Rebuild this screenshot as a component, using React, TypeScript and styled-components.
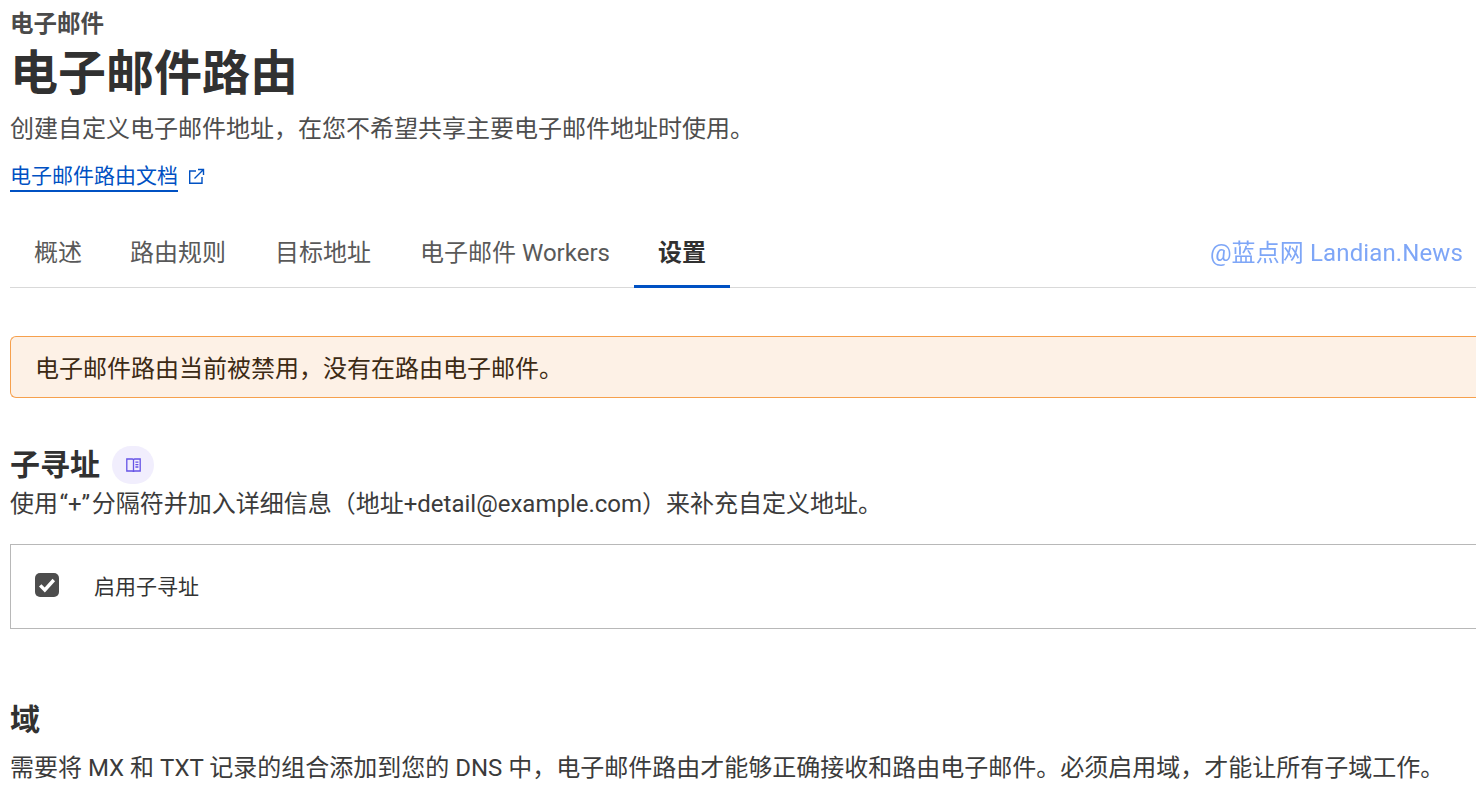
import React from 'react';
import styled, { createGlobalStyle } from 'styled-components';

const GlobalStyle = createGlobalStyle`
  html, body {
    margin: 0;
    padding: 0;
    background: #fff;
    overflow: hidden;
  }
  body {
    font-family: Roboto, "Noto Sans CJK SC", sans-serif;
    color: #36393a;
  }
`;

const Page = styled.div`
  position: relative;
  width: 1476px;
  height: 793px;
  padding-left: 10px;
  box-sizing: border-box;
  overflow: hidden;
`;

const Crumb = styled.div`
  font-size: 23.5px;
  line-height: 30px;
  font-weight: 700;
  color: #4a4a4a;
  padding-top: 9px;
`;

const Title = styled.h1`
  margin: 1px 0 0;
  font-size: 48px;
  line-height: 68px;
  font-weight: 700;
  color: #313131;
`;

const Lead = styled.p`
  margin: 4px 0 0;
  font-size: 24px;
  line-height: 34px;
  color: #4e4e4e;
`;

const DocRow = styled.div`
  display: flex;
  align-items: center;
  gap: 10px;
  margin-top: 13px;
  height: 34px;
`;

const DocLink = styled.a`
  font-size: 21px;
  line-height: 27px;
  padding-top: 2px;
  color: #0051c3;
  border-bottom: 2px solid #0051c3;
`;

const Tabs = styled.div`
  display: flex;
  height: 71px;
  margin-top: 23px;
  border-bottom: 1px solid #d9d9d9;
  box-sizing: content-box;
`;

const Tab = styled.div<{ $active?: boolean; $w: number }>`
  width: ${p => p.$w}px;
  height: 72px;
  box-sizing: border-box;
  display: flex;
  align-items: center;
  justify-content: center;
  font-size: 24px;
  font-weight: ${p => (p.$active ? 700 : 400)};
  color: ${p => (p.$active ? '#313131' : '#595959')};
  border-bottom: 3px solid ${p => (p.$active ? '#0051c3' : 'transparent')};
  white-space: nowrap;
`;

const Watermark = styled.div`
  position: absolute;
  top: 236px;
  right: 13px;
  font-size: 24px;
  line-height: 34px;
  letter-spacing: 0.12px;
  color: #7ea6f7;
  filter: blur(0.3px);
  white-space: nowrap;
`;

const Alert = styled.div`
  margin-top: 48px;
  margin-right: -10px;
  height: 62px;
  box-sizing: border-box;
  display: flex;
  align-items: center;
  padding: 0 0 2px 24px;
  font-size: 24px;
  color: #3c2a14;
  background: #fdf1e6;
  border: 1px solid #f6a04d;
  border-right: none;
  border-radius: 6px 0 0 6px;
`;

const SectionHead = styled.div`
  display: flex;
  align-items: center;
  gap: 12px;
  margin-top: 47px;
  height: 40px;
`;

const SectionTitle = styled.h2`
  margin: 0;
  font-size: 30px;
  line-height: 40px;
  font-weight: 700;
  color: #313131;
`;

const DocBadge = styled.span`
  width: 42px;
  height: 38px;
  border-radius: 19px;
  background: #f1eefd;
  display: flex;
  align-items: center;
  justify-content: center;
`;

const SectionText = styled.p`
  margin: 2px 0 0;
  font-size: 24px;
  line-height: 34px;
  color: #3b3b3b;
  white-space: nowrap;
`;

const Separator = styled.span`
  padding: 0 1.5px;
`;

const OptionCard = styled.label`
  display: flex;
  align-items: center;
  gap: 35px;
  margin-top: 23px;
  margin-right: -10px;
  height: 85px;
  box-sizing: border-box;
  padding: 0 0 4px 24px;
  border: 1px solid #b8b8b8;
  border-right: none;
  font-size: 21px;
  color: #333;
`;

const Check = styled.span`
  width: 24px;
  height: 24px;
  border-radius: 5px;
  background: #4d4d4d;
  display: flex;
  align-items: center;
  justify-content: center;
`;

const DomainTitle = styled(SectionTitle)`
  margin-top: 71px;
`;

const DomainText = styled(SectionText)`
  margin-top: 11px;
`;

const ExternalIcon = () => (
  <svg width="17" height="17" viewBox="0 0 17 17" fill="none" stroke="#0051c3" strokeWidth="1.4">
    <path d="M8 3H1.7v12.3H14V9" />
    <path d="M6.5 10.5 15.5 1.5M10 1.5h5.5V7" />
  </svg>
);

const BookIcon = () => (
  <svg width="15" height="15" viewBox="0 0 15 15" fill="none" stroke="#6553e6" strokeWidth="1.3">
    <path d="M.8 1h5.6c.6 0 1.1.4 1.1 1v12c0-.5-.5-1-1.1-1H.8zM14.2 1H8.6c-.6 0-1.1.4-1.1 1v12c0-.5.5-1 1.1-1h5.6z" />
    <path d="M9.4 4.2h3M9.4 6.6h3M9.4 9h3" />
  </svg>
);

const CheckIcon = () => (
  <svg width="20" height="20" viewBox="0 0 20 20" fill="none" stroke="#fff" strokeWidth="3.4">
    <path d="M3.2 10.4 7.8 15 16.8 5" />
  </svg>
);

const App = () => (
  <Page>
    <GlobalStyle />
    <Crumb>电子邮件</Crumb>
    <Title>电子邮件路由</Title>
    <Lead>创建自定义电子邮件地址，在您不希望共享主要电子邮件地址时使用。</Lead>
    <DocRow>
      <DocLink>电子邮件路由文档</DocLink>
      <ExternalIcon />
    </DocRow>
    <Tabs>
      <Tab $w={96}>概述</Tab>
      <Tab $w={144}>路由规则</Tab>
      <Tab $w={146}>目标地址</Tab>
      <Tab $w={238}>电子邮件 Workers</Tab>
      <Tab $w={96} $active>设置</Tab>
    </Tabs>
    <Watermark>@蓝点网 Landian.News</Watermark>
    <Alert>电子邮件路由当前被禁用，没有在路由电子邮件。</Alert>
    <SectionHead>
      <SectionTitle>子寻址</SectionTitle>
      <DocBadge><BookIcon /></DocBadge>
    </SectionHead>
    <SectionText>使用<Separator>“+”</Separator>分隔符并加入详细信息（地址+detail@example.com）来补充自定义地址。</SectionText>
    <OptionCard>
      <Check><CheckIcon /></Check>
      启用子寻址
    </OptionCard>
    <DomainTitle>域</DomainTitle>
    <DomainText>需要将 MX 和 TXT 记录的组合添加到您的 DNS 中，电子邮件路由才能够正确接收和路由电子邮件。必须启用域，才能让所有子域工作。</DomainText>
  </Page>
);

export default App;
